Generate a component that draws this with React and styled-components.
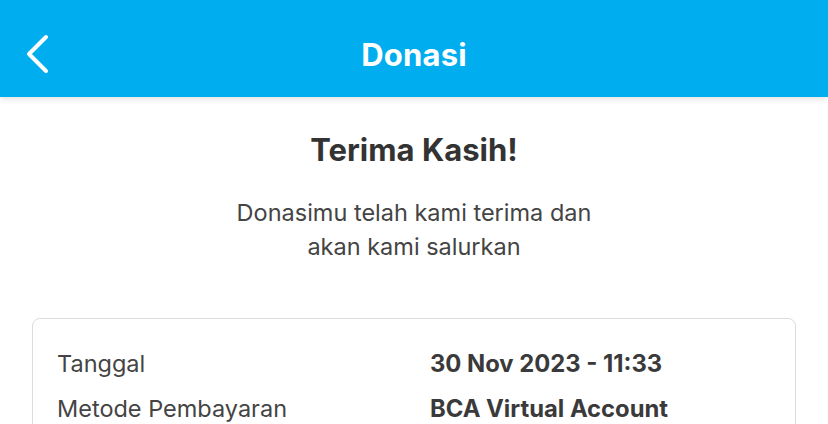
import React from "react";
import styled, { createGlobalStyle } from "styled-components";

const Global = createGlobalStyle`
  html, body { margin: 0; padding: 0; background: #fff; }
  body { font-family: Inter, "Noto Sans", sans-serif; -webkit-font-smoothing: antialiased; }
  * { box-sizing: border-box; }
`;

const Page = styled.div`
  width: 828px;
  height: 424px;
  background: #fff;
  overflow: hidden;
`;

const Header = styled.header`
  position: relative;
  height: 97px;
  background: #00aeef;
  display: flex;
  align-items: center;
  justify-content: center;
  padding-top: 12px;
  box-shadow: 0 2px 6px rgba(0, 0, 0, 0.12);
`;

const BackButton = styled.button`
  position: absolute;
  left: 20px;
  top: 30px;
  width: 40px;
  height: 48px;
  padding: 0;
  border: none;
  background: none;
  display: block;
`;

const Title = styled.h1`
  margin: 0;
  color: #fff;
  font-size: 31px;
  font-weight: 700;
  letter-spacing: 0.2px;
  line-height: 1;
`;

const Content = styled.main`
  padding: 36px 32px 0;
  display: flex;
  flex-direction: column;
  align-items: center;
`;

const Heading = styled.h2`
  margin: 0;
  font-size: 31px;
  font-weight: 700;
  color: #333;
  line-height: 34px;
`;

const Message = styled.p`
  margin: 29px 0 0;
  text-align: center;
  font-size: 23.5px;
  line-height: 34px;
  color: #444;
`;

const Card = styled.section`
  margin-top: 54px;
  width: 100%;
  border: 1px solid #dcdcdc;
  border-radius: 8px;
  padding: 29px 24px 20px;
  display: flex;
  flex-direction: column;
  gap: 13px;
`;

const Row = styled.div`
  display: grid;
  grid-template-columns: 373px 1fr;
  align-items: center;
  line-height: 32px;
`;

const Label = styled.span`
  font-size: 23.5px;
  color: #444;
`;

const Value = styled.span`
  font-size: 23.8px;
  font-weight: 700;
  color: #3a3a3a;
`;

export default function App() {
  return (
    <Page>
      <Global />
      <Header>
        <BackButton aria-label="Kembali">
          <svg width="40" height="48" viewBox="0 0 40 48" fill="none">
            <path d="M26 7 L9 24 L26 41" stroke="#fff" strokeWidth="4" strokeLinecap="round" strokeLinejoin="round" />
          </svg>
        </BackButton>
        <Title>Donasi</Title>
      </Header>
      <Content>
        <Heading>Terima Kasih!</Heading>
        <Message>
          Donasimu telah kami terima dan
          <br />
          akan kami salurkan
        </Message>
        <Card>
          <Row>
            <Label>Tanggal</Label>
            <Value>30 Nov 2023 - 11:33</Value>
          </Row>
          <Row>
            <Label>Metode Pembayaran</Label>
            <Value>BCA Virtual Account</Value>
          </Row>
        </Card>
      </Content>
    </Page>
  );
}
